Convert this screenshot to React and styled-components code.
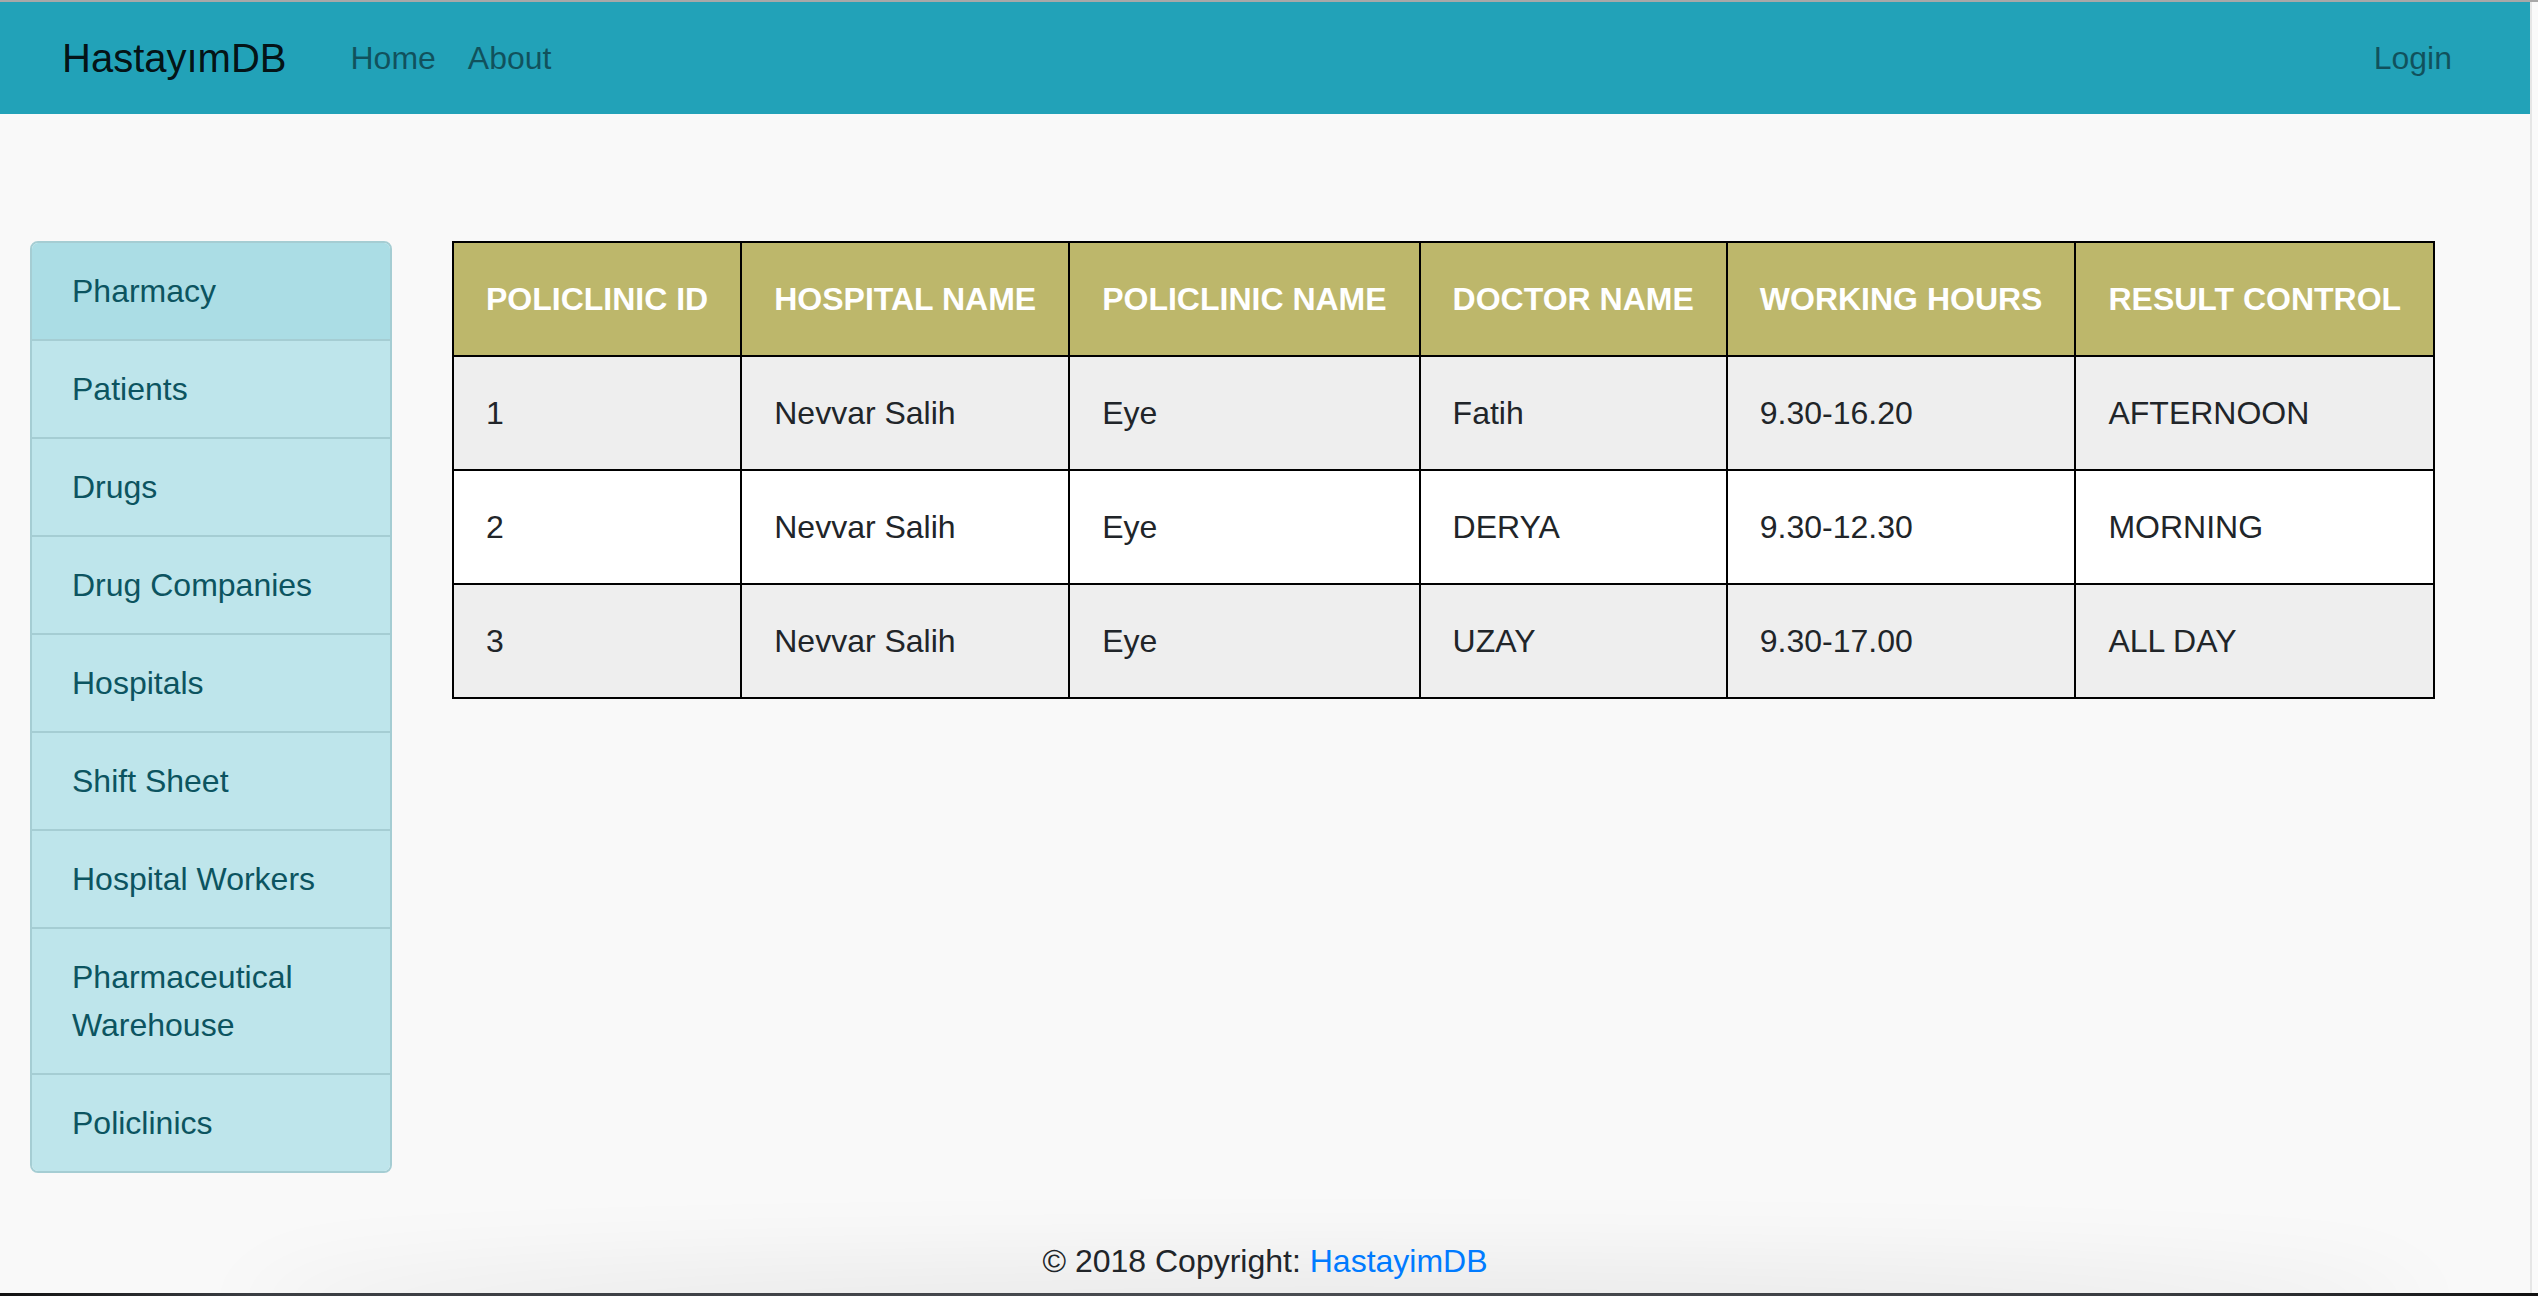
import React from "react";
import styled, { createGlobalStyle } from "styled-components";

const GlobalStyle = createGlobalStyle`
  html, body {
    margin: 0;
    padding: 0;
    height: 100%;
    background: #f9f9f9;
    overflow: hidden;
  }
  body {
    font-family: "Liberation Sans", Arial, Helvetica, sans-serif;
    color: #212529;
    font-size: 32px;
    line-height: 1.5;
  }
  #root { height: 100%; }
  * { box-sizing: border-box; }
`;

const Frame = styled.div`
  height: 100vh;
  display: flex;
  flex-direction: column;
  border-top: 2px solid #a8a8a8;
  overflow: hidden;
`;

const Window = styled.div`
  flex: 1;
  display: flex;
  min-height: 0;
`;

const Page = styled.div`
  flex: 1;
  display: flex;
  flex-direction: column;
  min-width: 0;
`;

const ScrollTrack = styled.div`
  width: 8px;
  background: #fafafa;
  border-left: 2px solid #e6e6e6;
`;

const Navbar = styled.nav`
  height: 112px;
  background: #22a2b8;
  display: flex;
  align-items: center;
  padding: 0 62px;
`;

const Brand = styled.a`
  font-size: 40px;
  line-height: 60px;
  color: rgba(0, 0, 0, 0.9);
  text-decoration: none;
  margin-right: 48px;
`;

const NavLink = styled.a`
  font-size: 32px;
  line-height: 48px;
  padding: 0 16px;
  color: rgba(0, 0, 0, 0.5);
  text-decoration: none;
`;

const Spacer = styled.div`
  flex: 1;
`;

const Main = styled.main`
  flex: 1;
  display: flex;
  align-items: flex-start;
  padding: 127px 0 0 30px;
  gap: 60px;
`;

const SideList = styled.ul`
  list-style: none;
  margin: 0;
  padding: 0;
  width: 362px;
  flex: none;
  border: 2px solid #a5cdd3;
  border-radius: 8px;
  overflow: hidden;
`;

const SideItem = styled.li`
  padding: 24px 40px;
  font-size: 32px;
  line-height: 48px;
  color: #0c5460;
  background: ${(p) => (p.$active ? "#abdde5" : "#bee5eb")};
  & + & {
    border-top: 2px solid #a5cdd3;
  }
`;

const Table = styled.table`
  border-collapse: collapse;
  border: 2px solid #000;
  flex: none;
`;

const HeadCell = styled.th`
  background: #bdb76b;
  color: #fff;
  font-weight: 700;
  text-transform: uppercase;
  text-align: left;
  padding: 32px;
  line-height: 48px;
  border: 2px solid #000;
  white-space: nowrap;
`;

const Row = styled.tr`
  background: ${(p) => (p.$striped ? "#eeeeee" : "#ffffff")};
`;

const Cell = styled.td`
  padding: 32px;
  line-height: 48px;
  border: 2px solid #000;
  color: #212529;
  white-space: nowrap;
`;

const Footer = styled.footer`
  position: relative;
  height: 112px;
  display: flex;
  align-items: flex-end;
  justify-content: center;
  padding-bottom: 8px;
  font-size: 32px;
  line-height: 48px;
  &::after {
    content: "";
    position: absolute;
    left: 260px;
    right: 120px;
    bottom: -30px;
    height: 30px;
    box-shadow: 0 0 90px 20px rgba(0, 0, 0, 0.09);
    border-radius: 50%;
    pointer-events: none;
  }
`;

const FooterText = styled.span`
  position: relative;
  z-index: 1;
`;

const FooterLink = styled.a`
  color: #007bff;
  text-decoration: none;
`;

const BottomEdge = styled.div`
  height: 3px;
  background: linear-gradient(90deg, #111 0%, #3c3f44 10%, #4a4d52 50%, #3c3f44 85%, #111 100%);
`;

const menu = [
  "Pharmacy",
  "Patients",
  "Drugs",
  "Drug Companies",
  "Hospitals",
  "Shift Sheet",
  "Hospital Workers",
  "Pharmaceutical Warehouse",
  "Policlinics",
];

const headers = [
  "Policlinic ID",
  "Hospital Name",
  "Policlinic Name",
  "Doctor Name",
  "Working Hours",
  "Result Control",
];

const rows = [
  ["1", "Nevvar Salih", "Eye", "Fatih", "9.30-16.20", "AFTERNOON"],
  ["2", "Nevvar Salih", "Eye", "DERYA", "9.30-12.30", "MORNING"],
  ["3", "Nevvar Salih", "Eye", "UZAY", "9.30-17.00", "ALL DAY"],
];

export default function App() {
  return (
    <>
      <GlobalStyle />
      <Frame>
        <Window>
          <Page>
            <Navbar>
              <Brand href="#">HastayımDB</Brand>
              <NavLink href="#">Home</NavLink>
              <NavLink href="#">About</NavLink>
              <Spacer />
              <NavLink href="#">Login</NavLink>
            </Navbar>
            <Main>
              <SideList>
                {menu.map((m, i) => (
                  <SideItem key={m} $active={i === 0}>
                    {m}
                  </SideItem>
                ))}
              </SideList>
              <Table>
                <thead>
                  <tr>
                    {headers.map((h) => (
                      <HeadCell key={h}>{h}</HeadCell>
                    ))}
                  </tr>
                </thead>
                <tbody>
                  {rows.map((r, i) => (
                    <Row key={i} $striped={i % 2 === 0}>
                      {r.map((c, j) => (
                        <Cell key={j}>{c}</Cell>
                      ))}
                    </Row>
                  ))}
                </tbody>
              </Table>
            </Main>
            <Footer>
              <FooterText>
                © 2018 Copyright: <FooterLink href="#">HastayimDB</FooterLink>
              </FooterText>
            </Footer>
          </Page>
          <ScrollTrack />
        </Window>
        <BottomEdge />
      </Frame>
    </>
  );
}
